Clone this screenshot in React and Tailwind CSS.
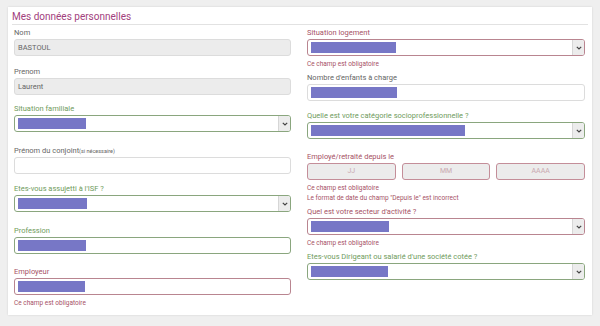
const GREEN = "text-[#6f9b5c]";
const RED = "text-[#a65266]";

function Bar({ w }) {
  return <div className={`h-[11px] bg-[#7777c6] ${w}`} />;
}

function Chevron() {
  return (
    <div className="absolute right-0 top-0 bottom-0 w-[12px] flex items-center justify-center bg-[#ececec] border-l border-[#d6d6d6] rounded-r-[2px]">
      <svg width="6" height="4" viewBox="0 0 6 4">
        <path d="M0.8 0.8 L3 3 L5.2 0.8" fill="none" stroke="#444" strokeWidth="1.2" />
      </svg>
    </div>
  );
}

function Label({ tone, children, className = "" }) {
  const color = tone === "green" ? GREEN : tone === "red" ? RED : "text-[#666]";
  return (
    <div className={`h-[12px] leading-[12px] text-[7.5px] ${color} ${className}`}>
      {children}
    </div>
  );
}

function Box({ tone, select, gray, children }) {
  const border =
    tone === "green"
      ? "border-[#8aa67e]"
      : tone === "red"
      ? "border-[#b98590]"
      : "border-[#dcdcdc]";
  return (
    <div
      className={`relative h-[17px] border ${border} rounded-[3px] ${
        gray ? "bg-[#ececec]" : "bg-white"
      } flex items-center px-[3px] text-[7.5px] text-[#666]`}
    >
      {children}
      {select && <Chevron />}
    </div>
  );
}

function Err({ children }) {
  return (
    <div className={`h-[10px] leading-[10px] text-[6.5px] ${RED} mt-[3px]`}>
      {children}
    </div>
  );
}

export default function App() {
  return (
    <div
      className="w-[600px] h-[326px] bg-[#efefef] pt-[7px] pl-[8px]"
      style={{ fontFamily: "Roboto, 'Liberation Sans', sans-serif" }}
    >
      <div className="w-[584px] h-[308px] bg-white shadow-[0_0_2px_rgba(0,0,0,0.12)]">
        <div className="px-[4px] pt-[3px]">
          <div className="text-[10px] leading-[14px] text-[#a2417d]">
            Mes données personnelles
          </div>
          <div className="h-px bg-[#e2e2e2]" />
        </div>

        <div className="grid grid-cols-[277px_278px] gap-x-[16px] pl-[6px] mt-[2px]">
          {/* LEFT */}
          <div className="flex flex-col">
            <Label>Nom</Label>
            <Box gray>BASTOUL</Box>

            <Label className="mt-[10px]">Prenom</Label>
            <Box gray>Laurent</Box>

            <Label tone="green" className="mt-[8px]">Situation familiale</Label>
            <Box tone="green" select>
              <Bar w="w-[68px]" />
            </Box>

            <Label className="mt-[13px]">
              Prénom du conjoint<span className="text-[5.5px]">(si nécessaire)</span>
            </Label>
            <Box />

            <Label tone="green" className="mt-[9px]">Etes-vous assujetti à l'ISF ?</Label>
            <Box tone="green" select>
              <Bar w="w-[69px]" />
            </Box>

            <Label tone="green" className="mt-[13px]">Profession</Label>
            <Box tone="green">
              <Bar w="w-[68px]" />
            </Box>

            <Label tone="red" className="mt-[12px]">Employeur</Label>
            <Box tone="red">
              <Bar w="w-[67px]" />
            </Box>
            <Err>Ce champ est obligatoire</Err>
          </div>

          {/* RIGHT */}
          <div className="flex flex-col">
            <Label tone="red">Situation logement</Label>
            <Box tone="red" select>
              <Bar w="w-[85px]" />
            </Box>
            <Err>Ce champ est obligatoire</Err>

            <Label className="mt-[3px]">Nombre d'enfants à charge</Label>
            <Box>
              <Bar w="w-[86px]" />
            </Box>

            <Label tone="green" className="mt-[9px]">
              Quelle est votre catégorie socioprofessionnelle ?
            </Label>
            <Box tone="green" select>
              <Bar w="w-[154px]" />
            </Box>

            <Label tone="red" className="mt-[12px]">Employé/retraité depuis le</Label>
            <div className="grid grid-cols-3 gap-x-[6px]">
              {["JJ", "MM", "AAAA"].map((p) => (
                <div
                  key={p}
                  className="h-[17px] border border-[#c48e99] rounded-[3px] bg-[#ececec] flex items-center justify-center text-[7px] text-[#caa9b0]"
                >
                  {p}
                </div>
              ))}
            </div>
            <Err>Ce champ est obligatoire</Err>
            <div className={`h-[10px] leading-[10px] text-[6.5px] ${RED}`}>
              Le format de date du champ "Depuis le" est incorrect
            </div>

            <Label tone="red" className="mt-[3px]">Quel est votre secteur d'activité ?</Label>
            <Box tone="red" select>
              <Bar w="w-[78px]" />
            </Box>
            <Err>Ce champ est obligatoire</Err>

            <Label tone="green" className="mt-[3px]">
              Etes-vous Dirigeant ou salarié d'une société cotée ?
            </Label>
            <Box tone="green" select>
              <Bar w="w-[77px]" />
            </Box>
          </div>
        </div>
      </div>
    </div>
  );
}
